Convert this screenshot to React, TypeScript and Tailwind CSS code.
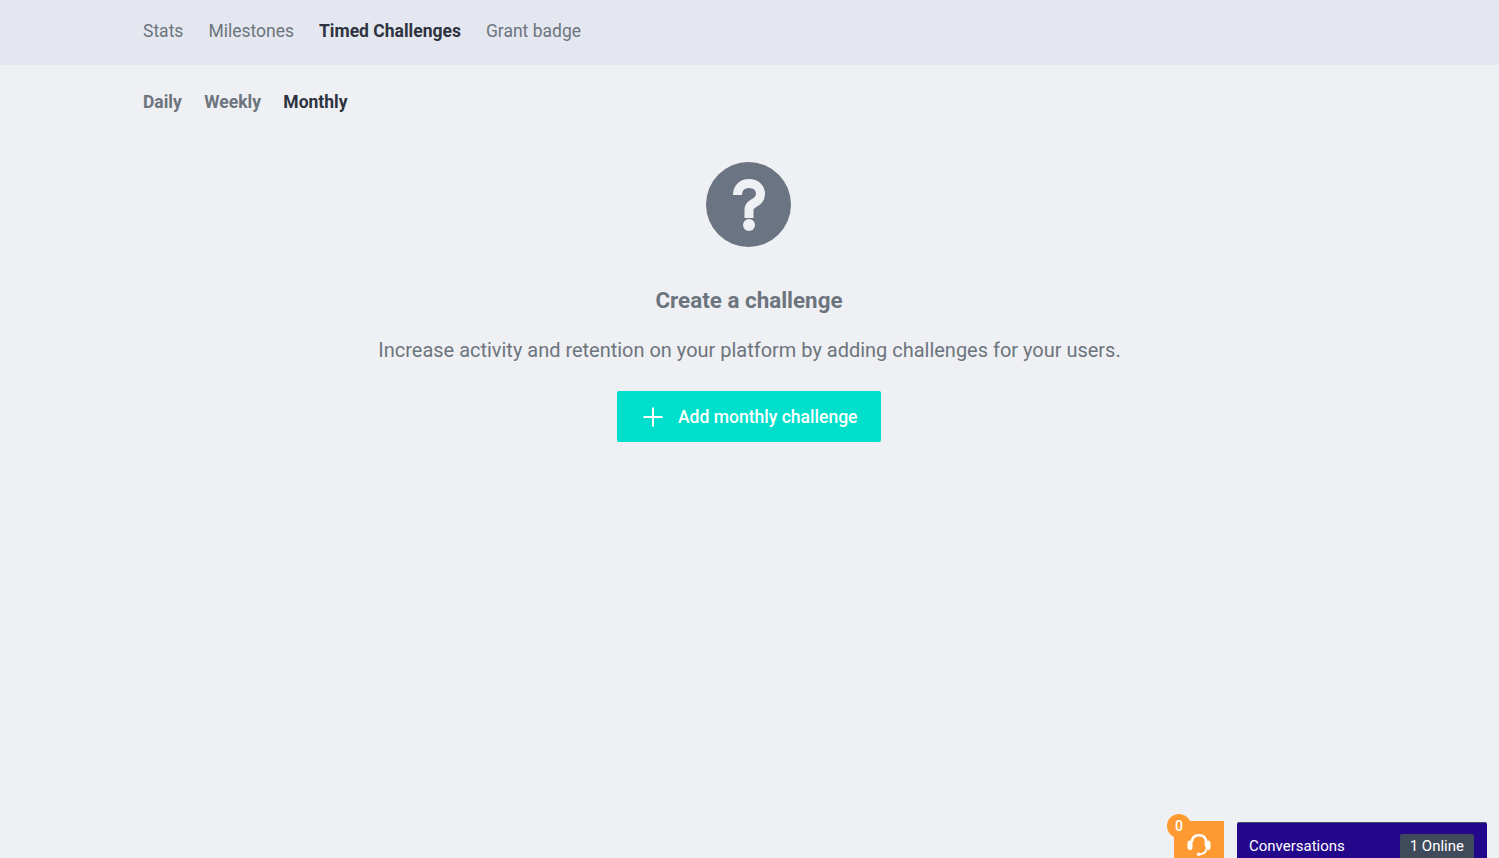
import React from 'react'

const mainTabs = [
  { name: 'Stats', active: false },
  { name: 'Milestones', active: false },
  { name: 'Timed Challenges', active: true },
  { name: 'Grant badge', active: false },
]

const periodTabs = [
  { name: 'Daily', active: false },
  { name: 'Weekly', active: false },
  { name: 'Monthly', active: true },
]

const QuestionIcon = () => (
  <svg viewBox="0 0 85 85" className="mr-[2px] h-[85px] w-[85px]" aria-hidden="true">
    <circle cx="42.5" cy="42.5" r="42.5" fill="#6a7482" />
    <path
      d="M31.5 33C31.5 26 36 21.5 43 21.5C50 21.5 54.5 26 54.5 32C54.5 38 50 40 46.5 42C44 43.5 43 45 43 48V56"
      fill="none"
      stroke="#eff0f4"
      strokeWidth="9"
    />
    <circle cx="43" cy="63" r="6" fill="#eff0f4" />
  </svg>
)

const HeadsetIcon = () => (
  <svg viewBox="0 0 24 22" className="h-[22px] w-[24px] shrink-0" aria-hidden="true">
    <path
      d="M5 8C5 3.5 7.5 1.25 12 1.25C16.5 1.25 19 3.5 19 8V12"
      fill="none"
      stroke="#fff"
      strokeWidth="2.5"
    />
    <rect x="0.5" y="6.5" width="5" height="9.5" rx="2.5" fill="#fff" />
    <rect x="18.5" y="6.5" width="5" height="9.5" rx="2.5" fill="#fff" />
    <path d="M19.5 15C19 18.5 16 20 12 20.5" fill="none" stroke="#fff" strokeWidth="1.8" />
    <circle cx="11.5" cy="20.3" r="1.7" fill="#fff" />
  </svg>
)

export default function App() {
  return (
    <div className="min-h-screen bg-[#eff0f4] font-['Roboto',sans-serif]">
      <nav className="flex h-[65px] items-center gap-[25px] bg-[#e4e7ef] px-[143px] pb-[2px]">
        {mainTabs.map((tab) => (
          <a
            key={tab.name}
            href="#"
            className={`text-[17.5px] ${tab.active ? 'font-bold text-[#2d3340]' : 'text-[#6c757d]'}`}
          >
            {tab.name}
          </a>
        ))}
      </nav>

      <div className="flex gap-[22.4px] px-[143px] pt-[24px]">
        {periodTabs.map((tab) => (
          <a
            key={tab.name}
            href="#"
            className={`text-[17.5px] leading-[26px] font-bold ${tab.active ? 'text-[#2d3340]' : 'text-[#6c757d]'}`}
          >
            {tab.name}
          </a>
        ))}
      </div>

      <main className="flex flex-col items-center pt-[47px]">
        <QuestionIcon />
        <h2 className="mt-[37px] mr-[1px] text-[22.4px] leading-[32px] font-bold text-[#6c757d]">Create a challenge</h2>
        <p className="mt-[20px] text-[19.98px] leading-[28px] text-[#6c757d]">
          Increase activity and retention on your platform by adding challenges for your users.
        </p>
        <button
          type="button"
          className="mt-[27px] mr-[1px] flex h-[51px] w-[264px] items-center gap-[14px] rounded-[2px] bg-[#00dfcb] pl-[25px] text-[17.55px] font-medium text-white"
        >
          <svg viewBox="0 0 22 22" className="h-[22px] w-[22px]" aria-hidden="true">
            <path d="M11 1.5V20.5M1.5 11H20.5" stroke="#fff" strokeWidth="2" />
          </svg>
          <span className="pt-[2px]">Add monthly challenge</span>
        </button>
      </main>

      <div className="fixed bottom-0 left-[1174px] flex h-[37px] w-[50px] items-start justify-center bg-[#ff9a33] pt-[13px]">
        <span className="absolute top-[-7px] left-[-7px] flex h-[24px] w-[24px] items-center justify-center rounded-full bg-[#ff9a33] text-sm font-medium text-white">
          0
        </span>
        <HeadsetIcon />
      </div>

      <div className="fixed right-[12px] bottom-0 flex h-[36px] w-[250px] items-start justify-between rounded-t-[2px] border-t border-[#3f4a5a] bg-[#24088c] pt-[11px] pr-[13px] pl-[12px]">
        <span className="text-[15px] leading-[24px] text-white">Conversations</span>
        <span className="h-[30px] rounded-[2px] bg-[#3f4a5a] px-[10px] text-[15px] leading-[24px] text-white">1 Online</span>
      </div>
    </div>
  )
}
